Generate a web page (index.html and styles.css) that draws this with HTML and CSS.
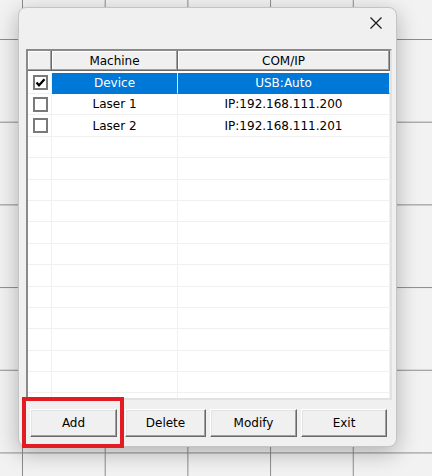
FILE: index.html
```html
<!DOCTYPE html>
<html>
<head>
<meta charset="utf-8">
<link rel="stylesheet" href="styles.css">
</head>
<body>
<div class="dialog">
  <div class="titlebar">
    <svg class="close" width="12" height="12" viewBox="0 0 12 12"><path d="M0.5 0.5L11.5 11.5M11.5 0.5L0.5 11.5" stroke="#1a1a1a" stroke-width="1.2" fill="none"/></svg>
  </div>
  <div class="list">
    <div class="header">
      <div class="hcell"></div>
      <div class="hcell">Machine</div>
      <div class="hcell">COM/IP</div>
    </div>
    <div class="body">
      <div class="row selected">
        <div class="cell cb"><span class="check on"><svg width="11" height="11" viewBox="0 0 11 11"><path d="M1.5 5.5L4 8.3L9.5 2.2" stroke="#000" stroke-width="2.2" fill="none"/></svg></span></div>
        <div class="cell sel">Device</div>
        <div class="cell sel">USB:Auto</div>
      </div>
      <div class="row">
        <div class="cell cb"><span class="check"></span></div>
        <div class="cell">Laser 1</div>
        <div class="cell">IP:192.168.111.200</div>
      </div>
      <div class="row">
        <div class="cell cb"><span class="check"></span></div>
        <div class="cell">Laser 2</div>
        <div class="cell">IP:192.168.111.201</div>
      </div>
      <div class="row"><div class="cell cb"></div><div class="cell"></div><div class="cell"></div></div>
      <div class="row"><div class="cell cb"></div><div class="cell"></div><div class="cell"></div></div>
      <div class="row"><div class="cell cb"></div><div class="cell"></div><div class="cell"></div></div>
      <div class="row"><div class="cell cb"></div><div class="cell"></div><div class="cell"></div></div>
      <div class="row"><div class="cell cb"></div><div class="cell"></div><div class="cell"></div></div>
      <div class="row"><div class="cell cb"></div><div class="cell"></div><div class="cell"></div></div>
      <div class="row"><div class="cell cb"></div><div class="cell"></div><div class="cell"></div></div>
      <div class="row"><div class="cell cb"></div><div class="cell"></div><div class="cell"></div></div>
      <div class="row"><div class="cell cb"></div><div class="cell"></div><div class="cell"></div></div>
      <div class="row"><div class="cell cb"></div><div class="cell"></div><div class="cell"></div></div>
      <div class="row"><div class="cell cb"></div><div class="cell"></div><div class="cell"></div></div>
      <div class="row"><div class="cell cb"></div><div class="cell"></div><div class="cell"></div></div>
      <div class="row"><div class="cell cb"></div><div class="cell"></div><div class="cell"></div></div>
    </div>
  </div>
  <div class="buttons">
    <button class="btn btn-add">Add</button>
    <button class="btn btn-delete">Delete</button>
    <button class="btn btn-modify">Modify</button>
    <button class="btn btn-exit">Exit</button>
  </div>
</div>
<div class="highlight"></div>
</body>
</html>
```
FILE: styles.css
```css
html, body {
  margin: 0;
  height: 100%;
}
body {
  background-color: #f2f2f2;
  background-image:
    linear-gradient(to right, #8c8c8c 1px, transparent 1px),
    linear-gradient(to bottom, #8c8c8c 1px, transparent 1px);
  background-size: 82.7px 82.7px;
  background-position: 22px 39px;
  font-family: "DejaVu Sans", sans-serif;
  font-size: 12px;
  color: #000;
  overflow: hidden;
  padding-top: 7px;
  box-sizing: border-box;
}
.dialog {
  margin-left: 18px;
  width: 379px;
  height: 440px;
  box-sizing: border-box;
  background: #f0f0f0;
  border: 1px solid #c4c4c4;
  border-radius: 8px;
  box-shadow: 0 6px 22px rgba(0, 0, 0, 0.28);
  display: flex;
  flex-direction: column;
}
.titlebar {
  height: 41px;
  box-sizing: border-box;
  padding: 9px 14px 0 0;
  display: flex;
  justify-content: flex-end;
  align-items: flex-start;
}
.close {
  display: block;
}
.list {
  margin: 0 4px 0 7px;
  height: 351px;
  box-sizing: border-box;
  border: 2px solid;
  border-color: #8a8a8a #e2e2e2 #e2e2e2 #8a8a8a;
  background: #fff;
  overflow: hidden;
}
.header {
  display: grid;
  grid-template-columns: 24px 126px 212px;
  height: 20px;
}
.hcell {
  box-sizing: border-box;
  background: #f0f0f0;
  border-right: 1px solid #696969;
  border-bottom: 1px solid #696969;
  box-shadow: inset -1px -1px 0 #a0a0a0, inset 1px 1px 0 #ffffff;
  display: flex;
  align-items: center;
  justify-content: center;
  line-height: 1;
  color: #000;
}
.body {
  padding-top: 1.6px;
}
.row {
  display: grid;
  grid-template-columns: 24px 126px 212px;
  height: 21.4px;
}
.cell {
  box-sizing: border-box;
  border-right: 1px solid #f0f0f0;
  border-bottom: 1px solid #f0f0f0;
  display: flex;
  align-items: center;
  justify-content: center;
  line-height: 1;
  white-space: nowrap;
}
.cb {
  justify-content: flex-start;
  padding-left: 5px;
}
.sel {
  background: #0078d7;
  color: #fff;
  border-bottom-color: #0078d7;
  border-right-color: #d8e8f6;
}
.check {
  width: 15px;
  height: 15px;
  box-sizing: border-box;
  border: 2px solid #7a7a7a;
  background: #fff;
  display: flex;
  align-items: center;
  justify-content: center;
}
.check svg {
  display: block;
}
.buttons {
  display: flex;
  padding: 9px 0 0 11px;
}
.btn {
  height: 28px;
  box-sizing: border-box;
  font-family: "DejaVu Sans", sans-serif;
  font-size: 12px;
  color: #000;
  background: #f0f0f0;
  border: 1px solid;
  border-color: #ffffff #696969 #696969 #ffffff;
  box-shadow: inset -1px -1px 0 #a0a0a0, inset 1px 1px 0 #e3e3e3;
  padding: 0;
  border-radius: 0;
}
.btn-add { width: 87px; }
.btn-delete { width: 81px; margin-left: 8px; }
.btn-modify { width: 87px; margin-left: 4px; }
.btn-exit { width: 86px; margin-left: 4px; }
.highlight {
  position: absolute;
  left: 22px;
  top: 397px;
  width: 102px;
  height: 51px;
  box-sizing: border-box;
  border: 4px solid #e31b23;
}
```
